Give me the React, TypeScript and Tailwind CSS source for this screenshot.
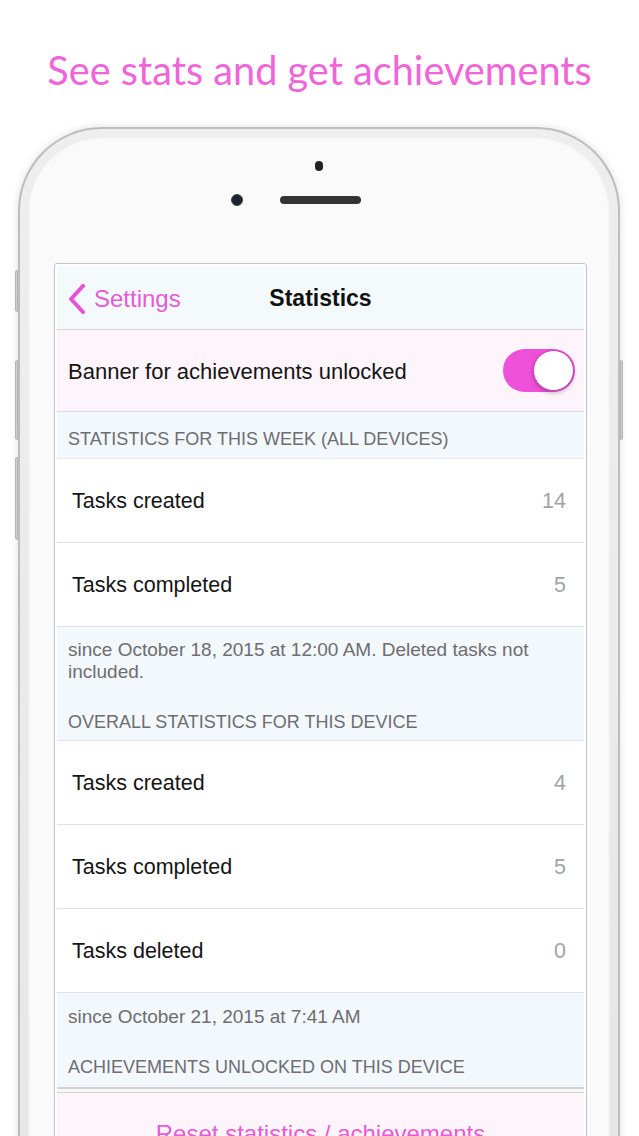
import React from "react";

const sans = { fontFamily: '"Liberation Sans", Arial, sans-serif' };

function Row({ label, value }: { label: string; value: string }) {
  return (
    <div className="h-[84px] flex items-center justify-between pl-[15px] pr-[18px] pt-[2px] bg-white border-b border-[#e3e0e3]">
      <span className="text-[21.5px] text-[#151515]">{label}</span>
      <span className="text-[21.5px] text-[#a2a2a6]">{value}</span>
    </div>
  );
}

export default function App() {
  return (
    <div className="w-[639px] h-[1136px] overflow-hidden bg-white" style={sans}>
      <h1
        className="h-[127px] pt-[44px] text-center text-[39.7px] leading-[52px] text-[#f264da]"
        style={{ fontFamily: 'Lato, "Open Sans", sans-serif' }}
      >
        See stats and get achievements
      </h1>

      <div className="relative ml-[18px] w-[602px] h-[1100px] rounded-t-[84px] bg-[#bdbdbd] p-[2px] shadow-[0_0_8px_rgba(0,0,0,0.12)]">
        {/* side buttons */}
        <div className="absolute -left-[3px] top-[143px] w-[3px] h-[42px] rounded-l-[2px] bg-[#d0d0d0] border border-[#b5b5b5]" />
        <div className="absolute -left-[3px] top-[233px] w-[3px] h-[80px] rounded-l-[2px] bg-[#d0d0d0] border border-[#b5b5b5]" />
        <div className="absolute -left-[3px] top-[330px] w-[3px] h-[83px] rounded-l-[2px] bg-[#d0d0d0] border border-[#b5b5b5]" />
        <div className="absolute -right-[3px] top-[233px] w-[3px] h-[80px] rounded-r-[2px] bg-[#d0d0d0] border border-[#b5b5b5]" />

        <div className="h-full rounded-t-[82px] bg-gradient-to-b from-[#eeeeee] to-[#e6e6e6] p-[8px]">
          <div className="h-full rounded-t-[74px] bg-[#fafafa] pt-[24px] shadow-[inset_0_0_3px_rgba(0,0,0,0.12)]">
            {/* sensors */}
            <div className="mx-auto w-[8px] h-[10px] rounded-full bg-[#222]" />
            <div className="mt-[23px] ml-[203px] flex items-center gap-[37px] h-[12px]">
              <div className="w-[12px] h-[12px] rounded-full bg-[#1a2233] border border-[#444]" />
              <div className="w-[81px] h-[8px] rounded-full bg-[#333]" />
            </div>

            {/* screen */}
            <div className="mt-[57px] ml-[26px] w-[533px] h-[900px] border border-[#c4c4c4] rounded-[3px] bg-white p-[2px]">
              {/* nav */}
              <div className="relative h-[64px] flex items-center pt-[2px] bg-[#f4f9fc] border-b border-[#d6d6d6]">
                <div className="flex items-center pl-[10px] gap-[7px]">
                  <svg width="20" height="30" viewBox="0 0 20 30" fill="none">
                    <path d="M16 2 L4 15 L16 28" stroke="#ea50d8" strokeWidth="4" strokeLinecap="round" strokeLinejoin="round" />
                  </svg>
                  <span className="text-[24px] text-[#e65bd6]">Settings</span>
                </div>
                <span className="absolute left-0 right-0 text-center text-[23px] font-bold text-[#111] pointer-events-none">
                  Statistics
                </span>
              </div>

              {/* toggle row */}
              <div className="h-[82px] flex items-center justify-between pl-[11px] pr-[9px] bg-[#fdf5fb] border-b border-[#d9d9d9]">
                <span className="text-[22px] text-[#151515] pt-[2px]">Banner for achievements unlocked</span>
                <div className="w-[72px] h-[43px] rounded-full bg-[#ef50d9] flex items-center justify-end pr-[1px]">
                  <div className="w-[41px] h-[41px] rounded-full bg-white border-[1.5px] border-[#c940b8] shadow-[0_2px_4px_rgba(0,0,0,0.25)]" />
                </div>
              </div>

              {/* header 1 */}
              <div className="h-[47px] pt-[16px] pl-[11px] bg-[#f3f8fc] border-b border-[#e8e8ec]">
                <span className="text-[18px] leading-[22px] text-[#6d6d72]">STATISTICS FOR THIS WEEK (ALL DEVICES)</span>
              </div>

              <Row label="Tasks created" value="14" />
              <Row label="Tasks completed" value="5" />

              {/* footer 1 + header 2 */}
              <div className="bg-[#f3f8fc] pl-[11px] pr-[30px] pt-[12px] pb-[7px] border-b border-[#ece0ea]">
                <p className="text-[19px] leading-[22px] text-[#6d6d72]">
                  since October 18, 2015 at 12:00 AM. Deleted tasks not included.
                </p>
                <p className="mt-[28px] text-[18px] leading-[22px] text-[#6d6d72]">OVERALL STATISTICS FOR THIS DEVICE</p>
              </div>

              <Row label="Tasks created" value="4" />
              <Row label="Tasks completed" value="5" />
              <Row label="Tasks deleted" value="0" />

              {/* footer 2 + header 3 */}
              <div className="bg-[#f3f8fc] pl-[11px] pt-[13px] pb-[9px]">
                <p className="text-[19px] leading-[22px] text-[#6d6d72]">since October 21, 2015 at 7:41 AM</p>
                <p className="mt-[28px] text-[18px] leading-[22px] text-[#6d6d72]">ACHIEVEMENTS UNLOCKED ON THIS DEVICE</p>
              </div>
              <div className="h-[6px] bg-[#f6f6f6] border-t-2 border-b border-[#d4d4d4]" />

              <div className="h-[82px] flex items-center justify-center bg-[#fdf5fb]">
                <span className="text-[24px] text-[#ea5ad6]">Reset statistics / achievements</span>
              </div>
            </div>
          </div>
        </div>
      </div>
    </div>
  );
}
